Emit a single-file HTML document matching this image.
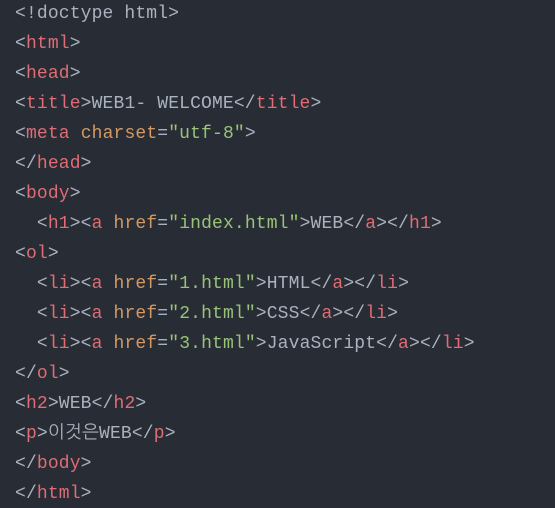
<!DOCTYPE html>
<html><head><style>
html,body{margin:0;background:#282c34;width:555px;height:508px;overflow:hidden}
pre{margin:0;padding:0 0 0 15px;position:relative;top:-1px;font:18px/30px "Liberation Mono","NanumGothic",monospace;color:#abb2bf;letter-spacing:0.14px}
.t{color:#e06c75}.a{color:#d19a66}.s{color:#98c379}
</style></head><body><pre>&lt;!doctype html&gt;
&lt;<span class="t">html</span>&gt;
&lt;<span class="t">head</span>&gt;
&lt;<span class="t">title</span>&gt;WEB1- WELCOME&lt;/<span class="t">title</span>&gt;
&lt;<span class="t">meta</span> <span class="a">charset</span>=<span class="s">"utf-8"</span>&gt;
&lt;/<span class="t">head</span>&gt;
&lt;<span class="t">body</span>&gt;
  &lt;<span class="t">h1</span>&gt;&lt;<span class="t">a</span> <span class="a">href</span>=<span class="s">"index.html"</span>&gt;WEB&lt;/<span class="t">a</span>&gt;&lt;/<span class="t">h1</span>&gt;
&lt;<span class="t">ol</span>&gt;
  &lt;<span class="t">li</span>&gt;&lt;<span class="t">a</span> <span class="a">href</span>=<span class="s">"1.html"</span>&gt;HTML&lt;/<span class="t">a</span>&gt;&lt;/<span class="t">li</span>&gt;
  &lt;<span class="t">li</span>&gt;&lt;<span class="t">a</span> <span class="a">href</span>=<span class="s">"2.html"</span>&gt;CSS&lt;/<span class="t">a</span>&gt;&lt;/<span class="t">li</span>&gt;
  &lt;<span class="t">li</span>&gt;&lt;<span class="t">a</span> <span class="a">href</span>=<span class="s">"3.html"</span>&gt;JavaScript&lt;/<span class="t">a</span>&gt;&lt;/<span class="t">li</span>&gt;
&lt;/<span class="t">ol</span>&gt;
&lt;<span class="t">h2</span>&gt;WEB&lt;/<span class="t">h2</span>&gt;
&lt;<span class="t">p</span>&gt;이것은WEB&lt;/<span class="t">p</span>&gt;
&lt;/<span class="t">body</span>&gt;
&lt;/<span class="t">html</span>&gt;</pre></body></html>
